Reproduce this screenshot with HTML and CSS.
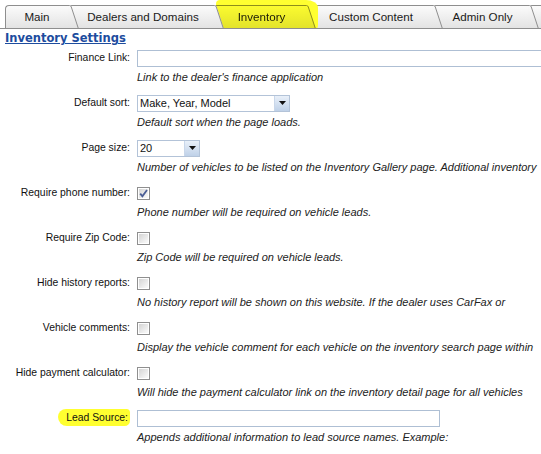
FILE: index.html
```html
<!DOCTYPE html>
<html>
<head>
<meta charset="utf-8">
<link rel="stylesheet" href="styles.css">
</head>
<body>
<svg class="defs" width="0" height="0" aria-hidden="true">
  <defs>
    <linearGradient id="tabgrad" x1="0" y1="0" x2="0" y2="1">
      <stop offset="0" stop-color="#fbfbfb"/>
      <stop offset="1" stop-color="#e3e3e3"/>
    </linearGradient>
    <linearGradient id="cbgrad" x1="0" y1="0" x2="1" y2="1">
      <stop offset="0" stop-color="#d4d4d4"/>
      <stop offset="1" stop-color="#fbfbfb"/>
    </linearGradient>
  </defs>
</svg>

<div class="tabs">
  <div class="tab tab-1"><div class="tab-body tab-first">Main</div><svg class="ear" width="11" height="23" viewBox="0 0 11 23"><path d="M0 0 L1.5 0 Q3 0 3.6 1.6 L10.5 23 L0 23 Z" fill="url(#tabgrad)"/><path d="M0 0.5 L1.5 0.5 Q2.8 0.5 3.3 2 L10.2 23" fill="none" stroke="#8e8e8e"/></svg></div>
  <div class="tab tab-2"><div class="tab-body">Dealers and Domains</div><svg class="ear" width="11" height="23" viewBox="0 0 11 23"><path d="M0 0 L1.5 0 Q3 0 3.6 1.6 L10.5 23 L0 23 Z" fill="url(#tabgrad)"/><path d="M0 0.5 L1.5 0.5 Q2.8 0.5 3.3 2 L10.2 23" fill="none" stroke="#8e8e8e"/></svg></div>
  <div class="tab tab-3 tab-marked"><div class="tab-body">Inventory</div><svg class="ear" width="11" height="23" viewBox="0 0 11 23"><path d="M0 0 L1.5 0 Q3 0 3.6 1.6 L10.5 23 L0 23 Z" fill="url(#tabgrad)"/><path d="M0 0.5 L1.5 0.5 Q2.8 0.5 3.3 2 L10.2 23" fill="none" stroke="#8e8e8e"/></svg></div>
  <div class="tab tab-4"><div class="tab-body">Custom Content</div><svg class="ear" width="11" height="23" viewBox="0 0 11 23"><path d="M0 0 L1.5 0 Q3 0 3.6 1.6 L10.5 23 L0 23 Z" fill="url(#tabgrad)"/><path d="M0 0.5 L1.5 0.5 Q2.8 0.5 3.3 2 L10.2 23" fill="none" stroke="#8e8e8e"/></svg></div>
  <div class="tab tab-5"><div class="tab-body">Admin Only</div><svg class="ear" width="11" height="23" viewBox="0 0 11 23"><path d="M0 0 L1.5 0 Q3 0 3.6 1.6 L10.5 23 L0 23 Z" fill="url(#tabgrad)"/><path d="M0 0.5 L1.5 0.5 Q2.8 0.5 3.3 2 L10.2 23" fill="none" stroke="#8e8e8e"/></svg></div>
  <div class="tab tab-6"><div class="tab-body"></div></div>
</div>

<h2 class="section-title"><a href="#">Inventory Settings</a></h2>

<div class="settings">
  <div class="setting">
    <div class="label">Finance Link:</div>
    <div class="value"><div class="text-input finance"></div></div>
    <div class="help">Link to the dealer's finance application</div>
  </div>

  <div class="setting">
    <div class="label">Default sort:</div>
    <div class="value"><div class="select sort"><span class="select-text">Make, Year, Model</span><span class="select-btn"><svg width="7" height="4" viewBox="0 0 7 4"><path d="M0 0 H7 L3.5 4 Z" fill="#111"/></svg></span></div></div>
    <div class="help">Default sort when the page loads.</div>
  </div>

  <div class="setting">
    <div class="label">Page size:</div>
    <div class="value"><div class="select size"><span class="select-text">20</span><span class="select-btn"><svg width="7" height="4" viewBox="0 0 7 4"><path d="M0 0 H7 L3.5 4 Z" fill="#111"/></svg></span></div></div>
    <div class="help">Number of vehicles to be listed on the Inventory Gallery page. Additional inventory</div>
  </div>

  <div class="setting">
    <div class="label">Require phone number:</div>
    <div class="value"><svg class="checkbox" width="13" height="13" viewBox="0 0 13 13"><rect x="0.5" y="0.5" width="12" height="12" fill="#fff" stroke="#8f8f8f"/><rect x="2" y="2" width="9" height="9" fill="url(#cbgrad)"/><path d="M3.2 6.6 L5.4 9.2 L10 3" fill="none" stroke="#4a5d95" stroke-width="1.8"/></svg></div>
    <div class="help">Phone number will be required on vehicle leads.</div>
  </div>

  <div class="setting">
    <div class="label">Require Zip Code:</div>
    <div class="value"><svg class="checkbox" width="13" height="13" viewBox="0 0 13 13"><rect x="0.5" y="0.5" width="12" height="12" fill="#fff" stroke="#8f8f8f"/><rect x="2" y="2" width="9" height="9" fill="url(#cbgrad)"/></svg></div>
    <div class="help">Zip Code will be required on vehicle leads.</div>
  </div>

  <div class="setting">
    <div class="label">Hide history reports:</div>
    <div class="value"><svg class="checkbox" width="13" height="13" viewBox="0 0 13 13"><rect x="0.5" y="0.5" width="12" height="12" fill="#fff" stroke="#8f8f8f"/><rect x="2" y="2" width="9" height="9" fill="url(#cbgrad)"/></svg></div>
    <div class="help">No history report will be shown on this website. If the dealer uses CarFax or</div>
  </div>

  <div class="setting">
    <div class="label">Vehicle comments:</div>
    <div class="value"><svg class="checkbox" width="13" height="13" viewBox="0 0 13 13"><rect x="0.5" y="0.5" width="12" height="12" fill="#fff" stroke="#8f8f8f"/><rect x="2" y="2" width="9" height="9" fill="url(#cbgrad)"/></svg></div>
    <div class="help">Display the vehicle comment for each vehicle on the inventory search page within</div>
  </div>

  <div class="setting">
    <div class="label">Hide payment calculator:</div>
    <div class="value"><svg class="checkbox" width="13" height="13" viewBox="0 0 13 13"><rect x="0.5" y="0.5" width="12" height="12" fill="#fff" stroke="#8f8f8f"/><rect x="2" y="2" width="9" height="9" fill="url(#cbgrad)"/></svg></div>
    <div class="help">Will hide the payment calculator link on the inventory detail page for all vehicles</div>
  </div>

  <div class="setting">
    <div class="label"><span class="marked">Lead Source:</span></div>
    <div class="value"><div class="text-input lead"></div></div>
    <div class="help">Appends additional information to lead source names. Example:</div>
  </div>
</div>
</body>
</html>
```

FILE: styles.css
```css
html, body {
  margin: 0;
  padding: 0;
  background: #fff;
  overflow: hidden;
  width: 541px;
  height: 454px;
}

body {
  font-family: "Liberation Sans", Arial, sans-serif;
  color: #111;
}

.defs {
  position: absolute;
  width: 0;
  height: 0;
}

/* Tabs */
.tabs {
  display: flex;
  padding: 5px 0 0 5px;
  border-bottom: 1px solid #8e8e8e;
  height: 23px;
  white-space: nowrap;
  overflow: hidden;
}

.tab {
  display: flex;
  position: relative;
  margin-right: -11px;
  height: 23px;
}

.tab-1 { z-index: 6; }
.tab-2 { z-index: 5; }
.tab-3 { z-index: 4; }
.tab-4 { z-index: 3; }
.tab-5 { z-index: 2; }
.tab-6 { z-index: 1; }

.tab-body {
  box-sizing: border-box;
  height: 23px;
  border-top: 1px solid #8e8e8e;
  border-left: 1px solid #8e8e8e;
  border-radius: 4px 0 0 0;
  background: linear-gradient(#fbfbfb, #e3e3e3);
  font-size: 11.6px;
  line-height: 21px;
  text-align: center;
  padding-left: 4px;
  color: #1a1a1a;
}

.tab-first { padding-left: 0; }

.tab-1 .tab-body { width: 63px; }
.tab-2 .tab-body { width: 145px; }
.tab-3 .tab-body { width: 92px; }
.tab-4 .tab-body { width: 127px; }
.tab-5 .tab-body { width: 96px; }
.tab-6 .tab-body { width: 30px; }

.ear {
  display: block;
  flex: none;
}

.tab-marked::after {
  content: "";
  position: absolute;
  left: 3px;
  right: -2px;
  top: -5px;
  bottom: -7px;
  background: #ffff30;
  mix-blend-mode: multiply;
  border-radius: 4px 12px 14px 5px / 4px 8px 10px 5px;
}

/* Heading */
.section-title {
  margin: 2px 0 3px;
  padding-left: 5px;
  font-family: "DejaVu Sans", Verdana, sans-serif;
  font-size: 11.5px;
  font-weight: bold;
  line-height: 14px;
}

.section-title a {
  color: #1d4c9e;
  text-decoration: underline;
}

/* Settings */
.settings {
  overflow: hidden;
}

.setting {
  display: grid;
  grid-template-columns: 132px 1fr;
  grid-template-rows: 20px 18px;
  column-gap: 5px;
  margin-bottom: 7px;
}

.label {
  text-align: right;
  padding-right: 2px;
  font-size: 10.4px;
  line-height: 20px;
  white-space: nowrap;
  color: #111;
}

.value {
  display: flex;
  align-items: center;
  min-width: 0;
}

.help {
  grid-column: 2;
  font-size: 11px;
  font-style: italic;
  line-height: 18px;
  white-space: nowrap;
  color: #222;
}

.text-input {
  box-sizing: border-box;
  height: 17px;
  border: 1px solid #aebfd4;
  background: #fff;
}

.finance { width: 412px; flex: none; }
.lead { width: 303px; }

.select {
  box-sizing: border-box;
  height: 17px;
  border: 1px solid #b3c3d8;
  background: #fff;
  display: flex;
  align-items: stretch;
}

.sort { width: 153px; }
.size { width: 63px; }

.select-text {
  flex: 1;
  font-size: 11px;
  line-height: 15px;
  padding-left: 2px;
  color: #111;
}

.select-btn {
  width: 14px;
  background: linear-gradient(#e9f0f9, #bfd1e8);
  border-left: 1px solid #c9d7ea;
  display: flex;
  align-items: center;
  justify-content: center;
}

.checkbox {
  display: block;
}

.marked {
  background: #ffff30;
  padding: 3px 2px 3px 8px;
  margin-left: -8px;
  border-radius: 9px 4px 6px 10px;
}
```
